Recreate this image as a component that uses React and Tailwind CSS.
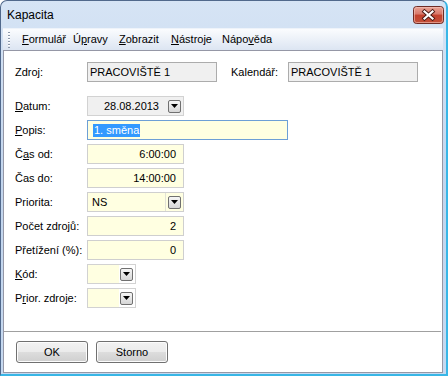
const Drop = () => (
  <div className="w-[13px] h-[13px] rounded-[2px] border border-[#707070] bg-gradient-to-b from-[#f6f6f6] to-[#d6d6d6] flex items-center justify-center shrink-0">
    <svg width="7" height="4" viewBox="0 0 7 4"><path d="M0 0H7L3.5 4Z" fill="#000" /></svg>
  </div>
);

const Label = ({ children }) => (
  <div className="w-[72px] shrink-0 text-[11px] leading-[13px] text-black">{children}</div>
);

const U = ({ children }) => <span className="underline underline-offset-[1px]">{children}</span>;

const Yellow = ({ children, w = "w-[97px]" }) => (
  <div className={`${w} h-[20px] border border-[#cfcfcf] bg-[#ffffe1] flex items-center justify-end pr-[7px] text-[11px]`}>{children}</div>
);

const Row = ({ label, children, first }) => (
  <div className={`flex items-center h-[20px] pl-[11px] ${first ? "mt-[14px]" : "mt-[4px]"}`}>
    <Label>{label}</Label>
    {children}
  </div>
);

const CloseBtn = () => (
  <svg width="31" height="18" viewBox="0 0 31 18" className="ml-auto mr-[-1px] mt-[1px] shrink-0">
    <defs>
      <linearGradient id="cg" x1="0" y1="0" x2="0" y2="1">
        <stop offset="0" stopColor="#eaa597" />
        <stop offset="0.45" stopColor="#d8786a" />
        <stop offset="0.5" stopColor="#c4412d" />
        <stop offset="1" stopColor="#c2513b" />
      </linearGradient>
    </defs>
    <rect x="0.5" y="0.5" width="30" height="17" rx="3" fill="url(#cg)" stroke="#6e2b25" />
    <rect x="1.5" y="1.5" width="28" height="15" rx="2" fill="none" stroke="#f3c4ba" strokeOpacity="0.6" />
    <path d="M11.5 5.5L19.5 12.5M19.5 5.5L11.5 12.5" stroke="#4a1a14" strokeWidth="4" strokeLinecap="square" />
    <path d="M11.5 5.5L19.5 12.5M19.5 5.5L11.5 12.5" stroke="#ffffff" strokeWidth="2.2" strokeLinecap="square" />
  </svg>
);

export default function App() {
  return (
    <div className="w-[448px] h-[376px] flex flex-col rounded-t-[7px] border border-[#51698c] border-r-2 border-b-2 border-r-[#38b6e6] border-b-[#38b6e6] bg-gradient-to-b from-[#d6e4f5] via-[#c2d5ed] to-[#c6d9f0] pl-[2px] pr-[3px] pb-[1px] font-['Liberation_Sans',Arial,sans-serif] text-black overflow-hidden">
      {/* Title bar */}
      <div className="h-[27px] shrink-0 flex items-center pl-[4px]">
        <span className="text-[12px] leading-[14px] mt-[1px]">Kapacita</span>
        <CloseBtn />
      </div>
      {/* Menu bar */}
      <div className="h-[22px] shrink-0 flex items-center bg-gradient-to-b from-[#fbfcfe] to-[#dce5f2] border-t border-[#eef3fa] text-[11px]">
        <div className="ml-[5px] w-[2px] h-[16px] bg-[repeating-linear-gradient(to_bottom,#8d99ab_0,#8d99ab_1px,#ffffff_1px,#ffffff_2px,transparent_2px,transparent_3px)]" />
        <div className="ml-[12px] w-[51px]"><U>F</U>ormulář</div>
        <div className="w-[46px]">Ú<U>p</U>ravy</div>
        <div className="w-[52px]"><U>Z</U>obrazit</div>
        <div className="w-[51px]"><U>N</U>ástroje</div>
        <div>Nápo<U>v</U>ěda</div>
      </div>
      {/* Panel */}
      <div className="flex-1 flex flex-col border border-[#9597a6] bg-white">
        <div className="flex items-center h-[20px] pl-[11px] mt-[11px]">
          <Label>Zdroj:</Label>
          <div className="w-[130px] h-[20px] border border-[#acacac] bg-[#f0f0f0] flex items-center pl-[2px] text-[11px]">PRACOVIŠTĚ 1</div>
          <div className="ml-[14px] w-[57px] text-[11px]">Kalendář:</div>
          <div className="w-[130px] h-[20px] border border-[#acacac] bg-[#f0f0f0] flex items-center pl-[2px] text-[11px]">PRACOVIŠTĚ 1</div>
        </div>

        <Row first label={<><U>D</U>atum:</>}>
          <div className="w-[97px] h-[20px] border border-[#d2d2d2] bg-[#f0f0f0] flex items-center justify-end pr-[2px] text-[11px]">
            <span>28.08.2013</span>
            <div className="ml-[9px]"><Drop /></div>
          </div>
        </Row>
        <Row label={<><U>P</U>opis:</>}>
          <div className="w-[201px] h-[20px] border border-[#6d9fd6] bg-[#ffffe1] flex items-center pl-[5px] text-[11px]">
            <span className="bg-[#3399ff] text-white leading-[13px] px-[1px]">1. směna</span>
          </div>
        </Row>
        <Row label={<>Č<U>a</U>s od:</>}>
          <Yellow>6:00:00</Yellow>
        </Row>
        <Row label="Čas do:">
          <Yellow>14:00:00</Yellow>
        </Row>
        <Row label="Priorita:">
          <div className="w-[97px] h-[20px] border border-[#cfcfcf] bg-[#ffffe1] flex items-center text-[11px]">
            <span className="pl-[4px] flex-1">NS</span>
            <div className="w-[1px] h-[18px] bg-[#e2e2d6]" />
            <div className="ml-[2px] mr-[2px]"><Drop /></div>
          </div>
        </Row>
        <Row label="Počet zdrojů:">
          <Yellow>2</Yellow>
        </Row>
        <Row label="Přetížení (%):">
          <Yellow>0</Yellow>
        </Row>
        <Row label={<><U>K</U>ód:</>}>
          <div className="w-[49px] h-[20px] border border-[#d2d2d2] bg-white flex items-center">
            <div className="w-[31px] h-[18px] bg-[#ffffe1]" />
            <div className="ml-[1px]"><Drop /></div>
          </div>
        </Row>
        <Row label={<>P<U>r</U>ior. zdroje:</>}>
          <div className="w-[49px] h-[20px] border border-[#d2d2d2] bg-white flex items-center">
            <div className="w-[31px] h-[18px] bg-[#ffffe1]" />
            <div className="ml-[1px]"><Drop /></div>
          </div>
        </Row>

        <div className="mt-[23px] h-[1px] mr-[1px] bg-[#a0a0a0]" />
        <div className="mt-[9px] flex pl-[12px] gap-[8px]">
          <div className="w-[72px] h-[22px] rounded-[3px] border border-[#707070] bg-[linear-gradient(to_bottom,#f2f2f2_0%,#ebebeb_50%,#dddddd_50%,#cfcfcf_100%)] flex items-center justify-center text-[11px] shadow-[inset_0_0_0_1px_#fcfcfc]">OK</div>
          <div className="w-[72px] h-[22px] rounded-[3px] border border-[#707070] bg-[linear-gradient(to_bottom,#f2f2f2_0%,#ebebeb_50%,#dddddd_50%,#cfcfcf_100%)] flex items-center justify-center text-[11px] shadow-[inset_0_0_0_1px_#fcfcfc]">Storno</div>
        </div>
      </div>
    </div>
  );
}
